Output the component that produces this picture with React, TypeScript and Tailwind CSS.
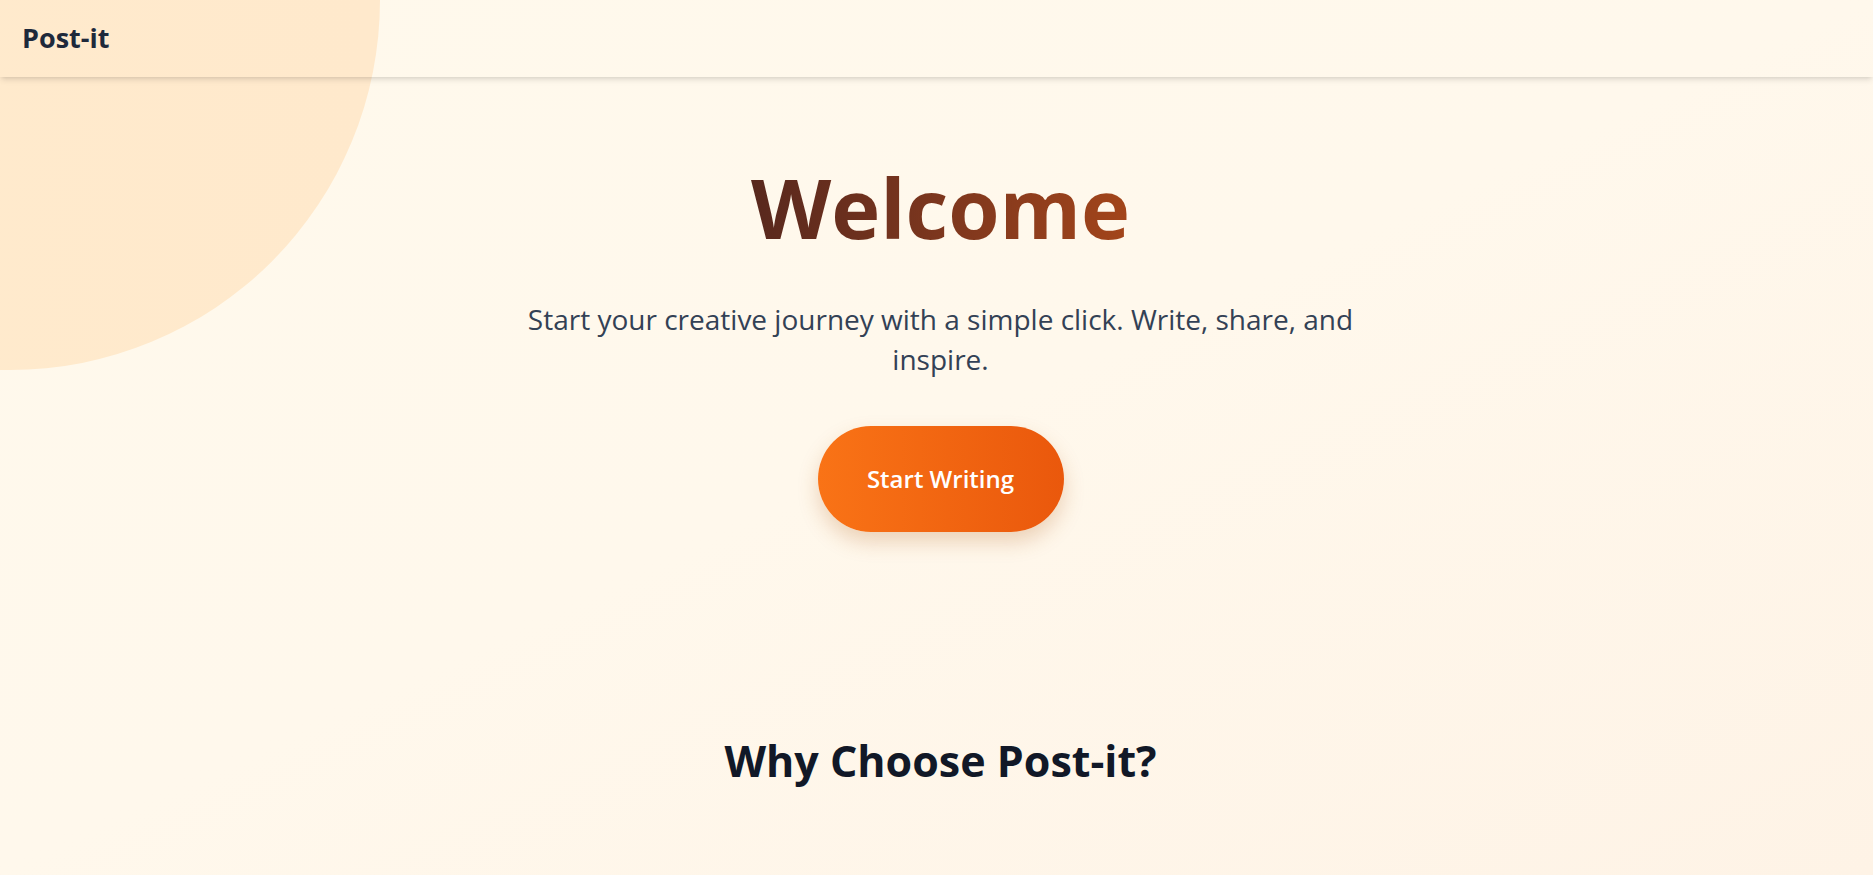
export default function App() {
  return (
    <div className="relative min-h-screen overflow-hidden bg-gradient-to-br from-[#fff9ec] via-[#fff8ec] to-[#fef3e6] font-['Open_Sans',sans-serif]">
      {/* decorative blob */}
      <div className="pointer-events-none absolute -left-[380px] -top-[370px] h-[740px] w-[760px] rounded-full bg-gradient-to-r from-[#ffebcd] to-[#ffe9cc]" />

      <header className="relative z-10 flex h-[77px] items-center px-[22px] shadow-md">
        <h1 className="text-[27px] font-bold text-[#1e293b]">Post-it</h1>
      </header>

      <main className="relative z-10 flex flex-col items-center pl-2">
        <h2 className="mt-[88px] bg-gradient-to-r from-[#58281d] to-[#a3451a] bg-clip-text text-[83px] leading-none font-bold text-transparent">
          Welcome
        </h2>
        <p className="mt-[51px] max-w-[880px] text-center text-[28px] leading-[40px] text-[#334155]">
          Start your creative journey with a simple click. Write, share, and inspire.
        </p>
        <button className="mt-[47px] h-[106px] w-[246px] rounded-full bg-gradient-to-r from-[#f97316] to-[#ea580c] text-[24px] font-semibold text-white shadow-[0_10px_20px_rgba(180,100,30,0.25)]">
          Start Writing
        </button>

        <h3 className="mt-[197px] text-[43px] font-bold text-[#111827]">Why Choose Post-it?</h3>
      </main>
    </div>
  );
}
